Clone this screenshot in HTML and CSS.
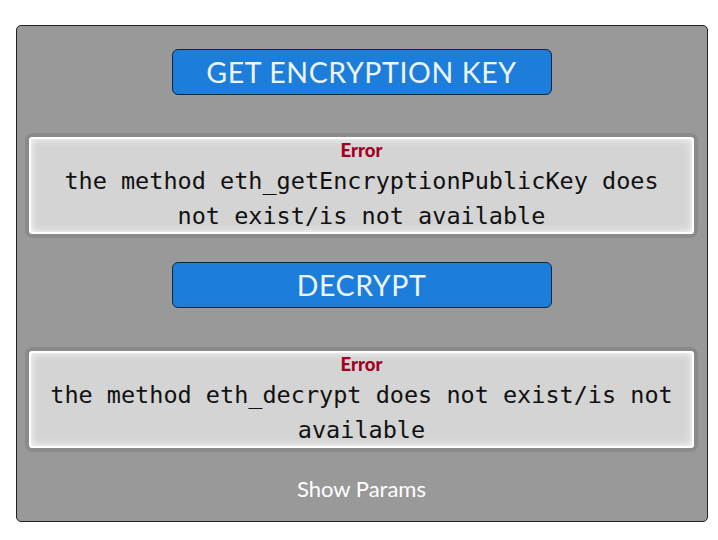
FILE: index.html
```html
<!DOCTYPE html>
<html>
<head>
<meta charset="utf-8">
<link rel="stylesheet" href="styles.css">
</head>
<body>
<div class="page">
  <div class="card">
    <button class="action">GET ENCRYPTION KEY</button>
    <div class="error first">
      <div class="error-inner">
        <div class="error-label">Error</div>
        <div class="error-msg">the method eth_getEncryptionPublicKey does not exist/is not available</div>
      </div>
    </div>
    <button class="action second">DECRYPT</button>
    <div class="error last">
      <div class="error-inner">
        <div class="error-label">Error</div>
        <div class="error-msg">the method eth_decrypt does not exist/is not available</div>
      </div>
    </div>
    <div class="show-params">Show Params</div>
  </div>
</div>
</body>
</html>
```

FILE: styles.css
```css
html, body {
  margin: 0;
  padding: 0;
  background: #ffffff;
}
.page {
  padding: 25px 10px 18px 16px;
}
.card {
  background: #999999;
  border: 1px solid #222222;
  border-radius: 5px;
  padding: 23px 9px 17px 8px;
  display: flex;
  flex-direction: column;
  align-items: center;
}
.action {
  width: 380px;
  height: 46px;
  background: #1c7ddb;
  border: 1px solid #15263a;
  border-radius: 6px;
  color: #eef4fc;
  font-family: Lato, "Open Sans", sans-serif;
  font-size: 28.5px;
  letter-spacing: 0.6px;
  font-weight: 400;
  padding: 0;
  cursor: pointer;
}
.second {
  margin-top: 24px;
}
.error {
  align-self: stretch;
  border: 4px solid #8a8a8a;
  border-radius: 8px;
  background: #ffffff;
}
.first {
  margin-top: 38px;
}
.last {
  margin-top: 39px;
}
.error-inner {
  background: #d4d4d4;
  border-radius: 4px;
  box-shadow: inset 0 0 0 2px #ffffff, inset 0 0 7px 3px #f4f4f4;
  text-align: center;
  padding: 0 12px;
}
.error-label {
  color: #a3001f;
  font-family: Lato, "Open Sans", sans-serif;
  font-weight: 900;
  font-size: 18.5px;
  line-height: 27px;
}
.error-msg {
  font-family: "DejaVu Sans Mono", monospace;
  font-size: 23.5px;
  line-height: 35px;
  color: #111111;
}
.show-params {
  margin-top: 22px;
  color: #ffffff;
  font-family: Lato, "Open Sans", sans-serif;
  font-size: 22px;
  line-height: 30px;
}
```
